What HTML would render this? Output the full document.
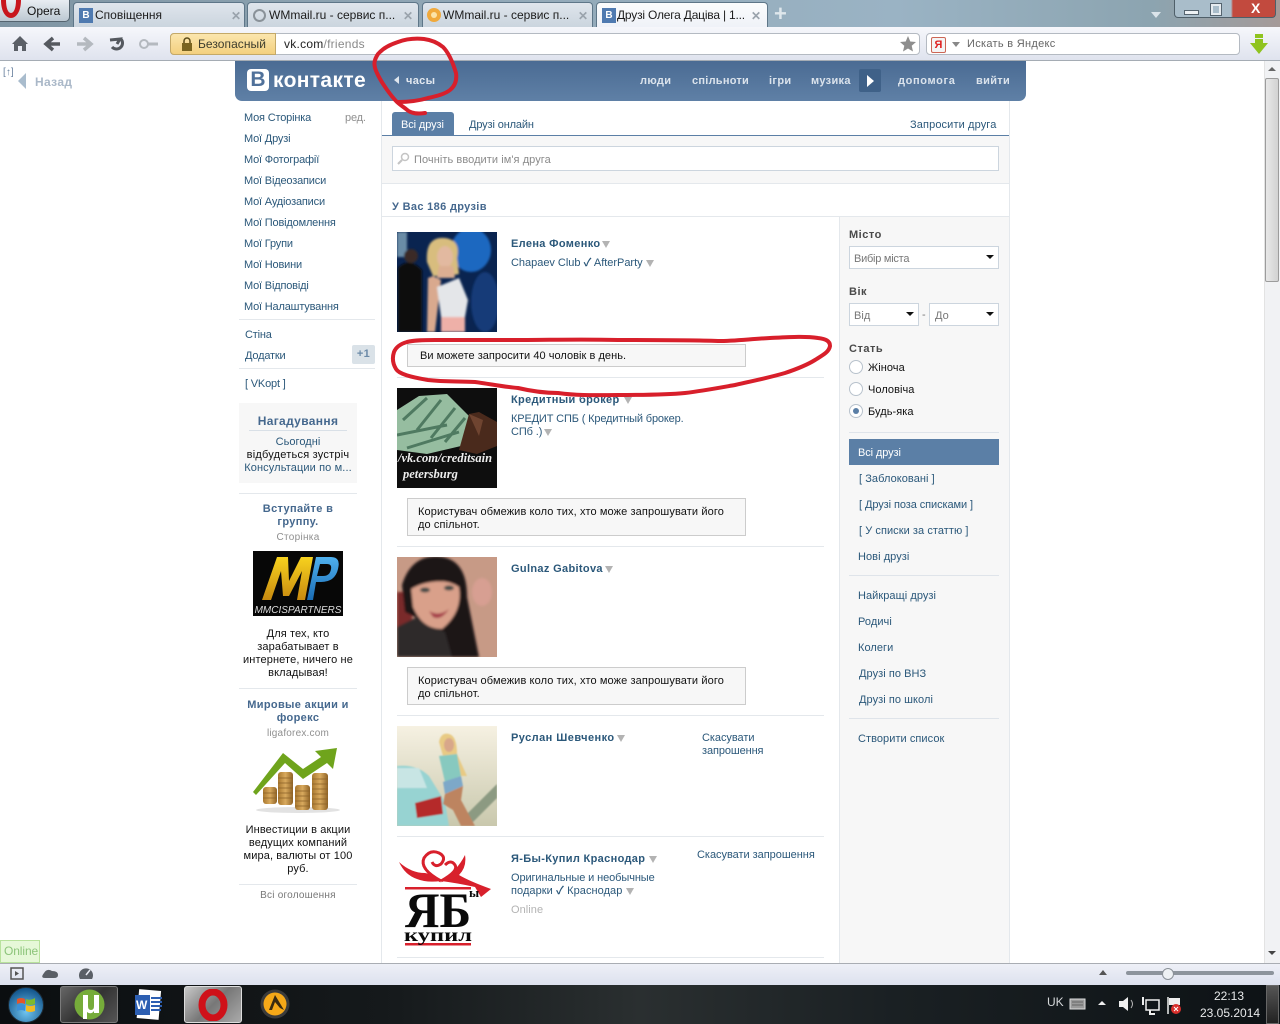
<!DOCTYPE html>
<html lang="uk"><head><meta charset="utf-8"><title>Друзі</title>
<style>
html,body{margin:0;padding:0;width:1280px;height:1024px;overflow:hidden;background:#fff}
body{position:relative;font:11px/14px "Liberation Sans","Noto Sans CJK SC",sans-serif;color:#2b587a}
.t{position:absolute;white-space:nowrap;line-height:14px;letter-spacing:.06px;margin-top:1px}
.n{margin-top:0}
.b{font-weight:bold;letter-spacing:.34px}
.c{text-align:center}
.k{color:#111}
.g{color:#8f8f8f}
.w{color:#777}
.d{color:#4a4a4a;font-weight:bold;letter-spacing:.5px}
.m .t{letter-spacing:-.18px}
.a{letter-spacing:.12px}
.r{position:absolute}
.l{position:absolute;height:1px;background:#e4e8ec}
.ar{position:absolute;width:0;height:0;border-left:4px solid transparent;border-right:4px solid transparent;border-top:7px solid #b3b3b3;margin-top:1px}
.sel{position:absolute;background:#fff;border:1px solid #ccd5de;box-sizing:border-box}
.sel i{position:absolute;right:4px;top:8px;width:0;height:0;border-left:4px solid transparent;border-right:4px solid transparent;border-top:4px solid #111}
.rad{position:absolute;width:12px;height:12px;border:1px solid #b8c2cc;border-radius:50%;background:#fff}
.tab{position:absolute;top:2px;height:25px;background:linear-gradient(#dfe5ec,#cbd5de);border:1px solid #5e7688;border-bottom:0;border-radius:4px 4px 0 0;box-sizing:border-box}
.tab span{position:absolute;left:21px;top:5px;font-size:12px;color:#1c1c1c;white-space:nowrap}
.x{position:absolute;top:6px;color:#9aa3ac;font-size:12px;font-weight:bold}
.vk{position:absolute;left:5px;top:5px;width:14px;height:15px;background:#4f7ab0;color:#fff;font:bold 10px/15px "Liberation Sans",sans-serif;text-align:center}
</style></head><body>

<!-- browser title strip -->
<div class="r" style="left:0;top:0;width:1280px;height:28px;background:linear-gradient(90deg,#7f95a3 0,#93a9b8 40%,#9ab3c4 70%,#8ca4b0 90%,#a59a98 100%)"></div>
<div class="r" style="left:0;top:0;width:70px;height:22px;background:linear-gradient(#e8edf2,#bcc8d2);border:1px solid #55646f;border-top:0;border-left:0;border-radius:0 0 5px 0;box-sizing:border-box"></div>
<svg class="r" style="left:0;top:0" width="24" height="20"><path d="M1 0 C1 12 6 18 11 18 C16 18 21 12 21 0 L16 0 C16 8 14 13 11 13 C8 13 6 8 6 0Z" fill="#c8161d"/></svg>
<div class="t k n" style="left:27px;top:4px;font-size:12px;letter-spacing:0">Opera</div>

<div class="tab" style="left:73px;width:172px"><div class="vk">В</div><span>Сповіщення</span><div class="x" style="left:157px">✕</div></div>
<div class="tab" style="left:247px;width:172px"><svg class="r" style="left:4px;top:5px" width="15" height="15"><circle cx="7.500" cy="7.500" r="5.500" fill="none" stroke="#8a9299" stroke-width="2"/></svg><span>WMmail.ru - сервис п...</span><div class="x" style="left:155px">✕</div></div>
<div class="tab" style="left:422px;width:171px"><svg class="r" style="left:3px;top:4px" width="16" height="16"><circle cx="8" cy="8" r="7" fill="#f0a93c"/><circle cx="8" cy="8" r="3" fill="#fbe3a8"/></svg><span style="left:20px">WMmail.ru - сервис п...</span><div class="x" style="left:155px">✕</div></div>
<div class="tab" style="left:596px;width:172px;height:27px;background:linear-gradient(#fbfcfd,#eef1f7)"><div class="vk">В</div><span style="left:20px;letter-spacing:-.2px">Друзі Олега Дацiва | 1...</span><div class="x" style="left:154px">✕</div></div>
<div class="t n" style="left:774px;top:2px;font-size:22px;line-height:24px;color:#dfe7ec;font-weight:bold">+</div>
<div class="r" style="left:1151px;top:12px;width:0;height:0;border-left:5px solid transparent;border-right:5px solid transparent;border-top:6px solid #dbe4ea"></div>
<div class="r" style="left:1174px;top:0;width:102px;height:18px;border:1px solid #4f5f69;border-top:0;border-radius:0 0 4px 4px;box-sizing:border-box;background:linear-gradient(90deg,#a9bdca 0,#a9bdca 56%,#c24a3e 58%,#c24a3e 100%)"></div>
<div class="r" style="left:1184px;top:10px;width:13px;height:3px;background:#eef2f5;border:1px solid #55646f"></div>
<div class="r" style="left:1211px;top:4px;width:6px;height:7px;border:2px solid #e6ecf0;outline:1px solid #55646f"></div>
<div class="t n" style="left:1251px;top:1px;color:#fff;font-size:14px;font-weight:bold">X</div>

<!-- toolbar -->
<div class="r" style="left:0;top:27px;width:1280px;height:34px;background:linear-gradient(#f6f7fb,#dfe3ee);border-bottom:1px solid #a5acb4;box-sizing:border-box"></div>
<svg class="r" style="left:10px;top:34px" width="150" height="20">
<path d="M2 10 L10 2 L18 10 H16 V17 H12 V12 H8 V17 H4 V10Z" fill="#5a5f66"/>
<path d="M50 10 H37 M43 4 L36 10 L43 16" stroke="#55595f" stroke-width="3.500" fill="none"/>
<path d="M67 10 H80 M74 4 L81 10 L74 16" stroke="#b4b9bf" stroke-width="3.500" fill="none"/>
<path d="M111 5 A6 6 0 1 1 102 13 M100 6 L110 5 L107 10" stroke="#55595f" stroke-width="3" fill="none"/>
<circle cx="134" cy="10" r="4" fill="none" stroke="#b4b9bf" stroke-width="2"/><path d="M138 10H148" stroke="#b4b9bf" stroke-width="3"/>
</svg>
<div class="r" style="left:170px;top:33px;width:750px;height:22px;background:#fff;border:1px solid #b4bac2;border-radius:4px;box-sizing:border-box"></div>
<div class="r" style="left:170px;top:33px;width:106px;height:22px;background:linear-gradient(#fbe6ad,#f3d07f);border:1px solid #c4a968;border-radius:4px 0 0 4px;box-sizing:border-box"></div>
<svg class="r" style="left:181px;top:36px" width="12" height="16"><path d="M3 7V5a3 3 0 0 1 6 0V7" stroke="#5a4a18" stroke-width="1.500" fill="none"/><rect x="1" y="7" width="10" height="8" fill="#7a6420"/></svg>
<div class="t n" style="left:198px;top:37px;color:#3d3d2e;font-size:12px;letter-spacing:.05px">Безопасный</div>
<div class="t n" style="left:284px;top:37px;font-size:12px;color:#222;letter-spacing:.25px">vk.com<span style="color:#8a8a8a">/friends</span></div>
<svg class="r" style="left:899px;top:35px" width="18" height="18"><path d="M9 1 L11.300 6.500 L17 7 L12.700 10.800 L14 16.500 L9 13.500 L4 16.500 L5.300 10.800 L1 7 L6.700 6.500Z" fill="#8e8e8e"/></svg>
<div class="r" style="left:926px;top:33px;width:314px;height:22px;background:#fff;border:1px solid #b4bac2;border-radius:4px;box-sizing:border-box"></div>
<div class="r" style="left:931px;top:37px;width:13px;height:14px;background:#f4f4f4;border:1px solid #c65;border-radius:2px;color:#e02020;font:bold 11px/14px 'Liberation Sans',sans-serif;text-align:center">Я</div>
<div class="r" style="left:952px;top:42px;width:0;height:0;border-left:4px solid transparent;border-right:4px solid transparent;border-top:5px solid #888"></div>
<div class="t" style="left:967px;top:36px;color:#666;letter-spacing:.3px">Искать в Яндекс</div>
<svg class="r" style="left:1249px;top:33px" width="20" height="22"><path d="M6 1H14V5H6ZM6 6H14V10H19L10 21L1 10H6Z" fill="#8fc31f"/></svg>

<!-- vk header -->
<div class="r" style="left:235px;top:61px;width:791px;height:40px;background:linear-gradient(#4a6b93,#5f80a6);border-radius:0 0 7px 7px"></div>
<div class="r" style="left:247px;top:69px;width:22px;height:22px;background:#fff;border-radius:4px;color:#50719a;font:bold 21px/22px 'Liberation Sans',sans-serif;text-align:center">В</div>
<div class="t" style="left:273px;top:69px;font:bold 21px/22px 'Liberation Sans',sans-serif;color:#fff;letter-spacing:.35px">контакте</div>
<div class="r" style="left:394px;top:76px;width:0;height:0;border-top:4px solid transparent;border-bottom:4px solid transparent;border-right:5px solid #dfe6ee"></div>
<div class="t b" style="left:406px;top:73px;color:#e2e8f0">часы</div>
<div class="t b" style="left:640px;top:73px;color:#dbe3ec">люди</div>
<div class="t b" style="left:692px;top:73px;color:#dbe3ec;letter-spacing:.25px">спільноти</div>
<div class="t b" style="left:769px;top:73px;color:#dbe3ec">ігри</div>
<div class="t b" style="left:811px;top:73px;color:#dbe3ec">музика</div>
<div class="r" style="left:859px;top:69px;width:22px;height:23px;background:#3f6188;border-radius:2px"></div>
<div class="r" style="left:867px;top:75px;width:0;height:0;border-top:6px solid transparent;border-bottom:6px solid transparent;border-left:7px solid #fff"></div>
<div class="t b" style="left:898px;top:73px;color:#dbe3ec;letter-spacing:.65px">допомога</div>
<div class="t b" style="left:976px;top:73px;color:#dbe3ec">вийти</div>

<!-- back -->
<div class="t n" style="left:3px;top:66px;color:#6b83a0;font-size:10px">[↑]</div>
<div class="r" style="left:18px;top:73px;width:0;height:0;border-top:8px solid transparent;border-bottom:8px solid transparent;border-right:8px solid #a9bccd"></div>
<div class="t b" style="left:35px;top:74px;color:#aab8c8;font-size:12px">Назад</div>

<!-- left menu -->
<div class="m">
<div class="t" style="left:244px;top:110px">Моя Сторінка</div>
<div class="t g" style="left:345px;top:110px">ред.</div>
<div class="t" style="left:244px;top:131px">Мої Друзі</div>
<div class="t" style="left:244px;top:152px">Мої Фотографії</div>
<div class="t" style="left:244px;top:173px">Мої Відеозаписи</div>
<div class="t" style="left:244px;top:194px">Мої Аудіозаписи</div>
<div class="t" style="left:244px;top:215px">Мої Повідомлення</div>
<div class="t" style="left:244px;top:236px">Мої Групи</div>
<div class="t" style="left:244px;top:257px">Мої Новини</div>
<div class="t" style="left:244px;top:278px">Мої Відповіді</div>
<div class="t" style="left:244px;top:299px">Мої Налаштування</div>
<div class="t" style="left:245px;top:327px">Стіна</div>
<div class="t" style="left:245px;top:348px">Додатки</div>
<div class="t" style="left:245px;top:376px">[ VKopt ]</div>
</div>
<div class="l" style="left:239px;top:319px;width:136px"></div>
<div class="r b" style="left:352px;top:345px;width:23px;height:19px;background:#dae2e8;border-radius:2px;color:#6b8aa8;text-align:center;line-height:19px;font-size:11px">+1</div>
<div class="l" style="left:239px;top:368px;width:136px"></div>

<div class="r" style="left:239px;top:403px;width:118px;height:80px;background:#f7f7f7"></div>
<div class="t b c" style="left:239px;width:118px;top:413px;font-size:12px;color:#45688e">Нагадування</div>
<div class="l" style="left:249px;top:430px;width:98px;background:#d9e0e7"></div>
<div class="t c" style="left:239px;width:118px;top:434px">Сьогодні</div>
<div class="t c k a" style="left:239px;width:118px;top:447px;letter-spacing:.22px">відбудеться зустріч</div>
<div class="t c a" style="left:239px;width:118px;top:460px">Консультации по м...</div>
<div class="l" style="left:239px;top:493px;width:118px"></div>
<div class="t b c" style="left:239px;width:118px;top:501px;color:#45688e">Вступайте в</div>
<div class="t b c" style="left:239px;width:118px;top:514px;color:#45688e">группу.</div>
<div class="t c g" style="left:239px;width:118px;top:530px;font-size:10px;letter-spacing:.3px">Сторінка</div>
<svg class="r" style="left:253px;top:551px" width="90" height="65"><defs><linearGradient id="my" x1="0" y1="0" x2="0" y2="1"><stop offset="0" stop-color="#f7d21e"/><stop offset="1" stop-color="#c88a10"/></linearGradient><linearGradient id="mb" x1="0" y1="0" x2="0" y2="1"><stop offset="0" stop-color="#4fb0ee"/><stop offset="1" stop-color="#1a6cb4"/></linearGradient></defs><rect width="90" height="65" fill="#070707"/>
<path d="M9 49L24 6H35L36 30L48 6H60L52 49H44L49 20L36 45H30L28 20L18 49Z" fill="url(#my)"/>
<path fill-rule="evenodd" d="M54 49L63 6H78Q88 6 85 18Q82 31 68 31H63L60 49ZM67 13L64 25H70Q77 25 78 18Q79 13 74 13Z" fill="url(#mb)"/>
<text x="45" y="62" text-anchor="middle" font-family="Liberation Sans,sans-serif" font-size="10" font-style="italic" fill="#ddd">MMCISPARTNERS</text></svg>
<div class="t c k a" style="left:239px;width:118px;top:626px">Для тех, кто</div>
<div class="t c k a" style="left:239px;width:118px;top:639px">зарабатывает в</div>
<div class="t c k a" style="left:239px;width:118px;top:652px">интернете, ничего не</div>
<div class="t c k a" style="left:239px;width:118px;top:665px">вкладывая!</div>
<div class="l" style="left:239px;top:688px;width:118px"></div>
<div class="t b c" style="left:239px;width:118px;top:697px;color:#45688e">Мировые акции и</div>
<div class="t b c" style="left:239px;width:118px;top:710px;color:#45688e">форекс</div>
<div class="t c g" style="left:239px;width:118px;top:726px;font-size:10px;letter-spacing:.2px">ligaforex.com</div>
<svg class="r" style="left:253px;top:745px" width="90" height="70"><defs><linearGradient id="cn" x1="0" y1="0" x2="1" y2="0"><stop offset="0" stop-color="#a8772f"/><stop offset=".5" stop-color="#d9aa5e"/><stop offset="1" stop-color="#8f6326"/></linearGradient></defs>
<path d="M0 47L30 8L50 24L68 12L62 6L84 3L80 24L74 18L50 34L32 18L3 50Z" fill="#6fa41c"/>
<ellipse cx="45" cy="65" rx="42" ry="3" fill="#e2e2e2"/>
<rect x="10" y="42" width="14" height="17" rx="3" fill="url(#cn)"/><rect x="25" y="27" width="15" height="33" rx="3" fill="url(#cn)"/><rect x="42" y="40" width="15" height="25" rx="3" fill="url(#cn)"/><rect x="59" y="28" width="16" height="37" rx="3" fill="url(#cn)"/>
<path d="M25 33H40M25 38H40M25 43H40M25 48H40M25 53H40M59 34H75M59 39H75M59 44H75M59 49H75M59 54H75M59 59H75M42 46H57M42 51H57M42 56H57M42 61H57M10 48H24M10 53H24" stroke="#8a6228" stroke-width=".8"/></svg>
<div class="t c k a" style="left:239px;width:118px;top:822px">Инвестиции в акции</div>
<div class="t c k a" style="left:239px;width:118px;top:835px">ведущих компаний</div>
<div class="t c k a" style="left:239px;width:118px;top:848px">мира, валюты от 100</div>
<div class="t c k a" style="left:239px;width:118px;top:861px">руб.</div>
<div class="l" style="left:239px;top:884px;width:118px"></div>
<div class="t c w" style="left:239px;width:118px;top:888px;font-size:10px;letter-spacing:.22px">Всі оголошення</div>

<!-- main column -->
<div class="r" style="left:381px;top:101px;width:1px;height:862px;background:#e4e8ec"></div>
<div class="r" style="left:1009px;top:101px;width:1px;height:862px;background:#e4e8ec"></div>
<div class="r" style="left:382px;top:136px;width:627px;height:47px;background:#f7f7f7;border-bottom:1px solid #e4e8ec;box-sizing:content-box"></div>
<div class="r" style="left:382px;top:135px;width:627px;height:1px;background:#5b7fa6"></div>
<div class="r" style="left:392px;top:112px;width:62px;height:23px;background:#5b7fa6;border-radius:3px 3px 0 0"></div>
<div class="t" style="left:401px;top:117px;color:#fff;letter-spacing:-.1px">Всі друзі</div>
<div class="t" style="left:469px;top:117px;letter-spacing:-.13px">Друзі онлайн</div>
<div class="t" style="left:910px;top:117px;letter-spacing:.12px">Запросити друга</div>
<div class="r" style="left:392px;top:146px;width:607px;height:25px;background:#fff;border:1px solid #ccd5de;box-sizing:border-box"></div>
<svg class="r" style="left:397px;top:152px" width="13" height="13"><circle cx="8" cy="5" r="3.500" fill="none" stroke="#c4c4c4" stroke-width="1.500"/><path d="M5 8L1 12" stroke="#c4c4c4" stroke-width="2"/></svg>
<div class="t" style="left:414px;top:152px;color:#8a8a8a;letter-spacing:.07px">Почніть вводити ім'я друга</div>
<div class="t b" style="left:392px;top:199px;color:#45688e">У Вас 186 друзів</div>
<div class="l" style="left:382px;top:216px;width:627px"></div>

<!-- filter column -->
<div class="r" style="left:839px;top:217px;width:170px;height:746px;background:#f7f7f7;border-left:1px solid #e4e8ec;box-sizing:border-box"></div>
<div class="t d" style="left:849px;top:227px">Місто</div>
<div class="sel" style="left:849px;top:246px;width:150px;height:23px"><i></i></div>
<div class="t w" style="left:854px;top:251px;letter-spacing:-.25px">Вибір міста</div>
<div class="t d" style="left:849px;top:284px">Вік</div>
<div class="sel" style="left:849px;top:303px;width:70px;height:23px"><i></i></div>
<div class="t w" style="left:854px;top:308px">Від</div>
<div class="t w" style="left:922px;top:307px">-</div>
<div class="sel" style="left:929px;top:303px;width:70px;height:23px"><i></i></div>
<div class="t w" style="left:935px;top:308px">До</div>
<div class="t d" style="left:849px;top:341px">Стать</div>
<div class="rad" style="left:849px;top:360px"></div><div class="t k" style="left:868px;top:360px">Жіноча</div>
<div class="rad" style="left:849px;top:382px"></div><div class="t k" style="left:868px;top:382px">Чоловіча</div>
<div class="rad" style="left:849px;top:404px"></div><div class="r" style="left:853px;top:408px;width:6px;height:6px;border-radius:50%;background:#5b7fa6"></div><div class="t k" style="left:868px;top:404px">Будь-яка</div>
<div class="l" style="left:849px;top:432px;width:150px;background:#dfe4ea"></div>
<div class="r" style="left:849px;top:439px;width:150px;height:26px;background:#5b7fa6"></div>
<div class="t" style="left:858px;top:445px;color:#fff;letter-spacing:-.1px">Всі друзі</div>
<div class="t" style="left:859px;top:471px">[ Заблоковані ]</div>
<div class="t" style="left:859px;top:497px;letter-spacing:-.08px">[ Друзі поза списками ]</div>
<div class="t" style="left:859px;top:523px">[ У списки за статтю ]</div>
<div class="t" style="left:858px;top:549px">Нові друзі</div>
<div class="l" style="left:849px;top:575px;width:150px;background:#dfe4ea"></div>
<div class="t" style="left:858px;top:588px">Найкращі друзі</div>
<div class="t" style="left:858px;top:614px">Родичі</div>
<div class="t" style="left:858px;top:640px">Колеги</div>
<div class="t" style="left:859px;top:666px">Друзі по ВНЗ</div>
<div class="t" style="left:859px;top:692px">Друзі по школі</div>
<div class="l" style="left:849px;top:718px;width:150px;background:#dfe4ea"></div>
<div class="t" style="left:858px;top:731px">Створити список</div>

<!-- friend 1 -->
<svg class="r" style="left:397px;top:232px" width="100" height="100"><defs><filter id="f1"><feGaussianBlur stdDeviation="1"/></filter></defs><rect width="100" height="100" fill="#0a2450"/><g filter="url(#f1)"><ellipse cx="74" cy="18" rx="20" ry="22" fill="#1a68c0"/><ellipse cx="88" cy="70" rx="14" ry="30" fill="#123a78"/><rect x="0" y="0" width="10" height="25" fill="#6a8ca6"/><path d="M1 100V36Q12 24 25 38V100Z" fill="#08080e"/><circle cx="14" cy="24" r="7" fill="#3a2c28"/><path d="M30 30Q28 4 48 6Q64 8 60 26L62 42L52 44L36 44Z" fill="#d8bd7e"/><ellipse cx="48" cy="25" rx="8" ry="11" fill="#e2b9a0"/><path d="M42 34H56L58 46H40Z" fill="#dcae92"/><path d="M31 46L36 44L44 48L38 100H30Z" fill="#d9a98e"/><path d="M40 55L62 46L71 68L68 85H44Z" fill="#e4e6e9"/><rect x="44" y="85" width="24" height="15" fill="#eeb0a8"/></g></svg>
<div class="t b" style="left:511px;top:236px">Елена Фоменко</div><div class="ar" style="left:602px;top:240px"></div>
<div class="t" style="left:511px;top:255px;letter-spacing:-.02px">Chapaev Club <b>✓</b> AfterParty</div><div class="ar" style="left:646px;top:259px"></div>
<div class="r" style="left:407px;top:344px;width:339px;height:23px;background:#f7f7f7;border:1px solid #ccc;box-sizing:border-box"></div>
<div class="t k" style="left:420px;top:348px;letter-spacing:.04px">Ви можете запросити 40 чоловік в день.</div>
<div class="l" style="left:397px;top:377px;width:427px"></div>

<!-- friend 2 -->
<svg class="r" style="left:397px;top:388px" width="100" height="100"><rect width="100" height="100" fill="#0e0e0e"/><path d="M0 22L22 8L50 6L74 30L64 58L30 66L0 62Z" fill="#96bda0"/><path d="M6 32L30 10M20 42L44 12M34 50L58 20M48 54L68 30M0 47L50 37M10 60L62 44" stroke="#4f7a61" stroke-width="3"/><path d="M62 62L72 26L82 24L100 34V58L80 66Z" fill="#4a2a1c"/><path d="M72 26L86 32L82 48Z" fill="#6f4430"/>
<text x="1" y="74" font-family="Liberation Serif,serif" font-size="12.500" font-weight="bold" font-style="italic" fill="#eee">/vk.com/creditsain</text><text x="6" y="90" font-family="Liberation Serif,serif" font-size="12.500" font-weight="bold" font-style="italic" fill="#eee">petersburg</text></svg>
<div class="t b" style="left:511px;top:392px">Кредитный брокер</div><div class="ar" style="left:624px;top:396px"></div>
<div class="t" style="left:511px;top:411px;letter-spacing:-.15px">КРЕДИТ СПБ ( Кредитный брокер.</div>
<div class="t" style="left:511px;top:424px;letter-spacing:-.1px">СПб .)</div><div class="ar" style="left:544px;top:428px"></div>
<div class="r" style="left:407px;top:498px;width:339px;height:38px;background:#f7f7f7;border:1px solid #ccc;box-sizing:border-box"></div>
<div class="t k" style="left:418px;top:504px;letter-spacing:.11px">Користувач обмежив коло тих, хто може запрошувати його</div>
<div class="t k" style="left:418px;top:517px;letter-spacing:.11px">до спільнот.</div>
<div class="l" style="left:397px;top:546px;width:427px"></div>

<!-- friend 3 -->
<svg class="r" style="left:397px;top:557px" width="100" height="100"><defs><filter id="f3"><feGaussianBlur stdDeviation="1.200"/></filter></defs><rect width="100" height="100" fill="#c79a86"/><g filter="url(#f3)"><rect x="0" y="35" width="15" height="35" fill="#7a2c2a"/><ellipse cx="85" cy="35" rx="10" ry="14" fill="#d79f92"/><path d="M0 100V70L20 60H70L78 100Z" fill="#2f2a2c"/><path d="M5 28Q15 -4 45 0Q70 4 70 40L82 100H55L48 75L18 60L8 55Z" fill="#1b1218"/><path d="M14 30Q45 18 62 30Q66 55 45 72Q25 72 16 50Z" fill="#d9a08a"/><path d="M14 14H60L62 27Q35 20 14 32Z" fill="#1b1218"/><ellipse cx="28" cy="33" rx="5" ry="2.500" fill="#3f4a46"/><ellipse cx="52" cy="31" rx="5" ry="2.500" fill="#3f4a46"/><path d="M32 54Q42 60 52 52Q44 64 36 60Z" fill="#a63e4a"/></g></svg>
<div class="t b" style="left:511px;top:561px">Gulnaz Gabitova</div><div class="ar" style="left:605px;top:565px"></div>
<div class="r" style="left:407px;top:667px;width:339px;height:38px;background:#f7f7f7;border:1px solid #ccc;box-sizing:border-box"></div>
<div class="t k" style="left:418px;top:673px;letter-spacing:.11px">Користувач обмежив коло тих, хто може запрошувати його</div>
<div class="t k" style="left:418px;top:686px;letter-spacing:.11px">до спільнот.</div>
<div class="l" style="left:397px;top:715px;width:427px"></div>

<!-- friend 4 -->
<svg class="r" style="left:397px;top:726px" width="100" height="100"><defs><filter id="f4"><feGaussianBlur stdDeviation=".8"/></filter><linearGradient id="g4" x1="0" y1="0" x2="0" y2="1"><stop offset="0" stop-color="#f6f1e2"/><stop offset="1" stop-color="#c9c8ad"/></linearGradient></defs><rect width="100" height="100" fill="url(#g4)"/><g filter="url(#f4)"><path d="M0 100V40Q20 38 32 50L48 76L52 100Z" fill="#97d3d2"/><path d="M0 42H22L30 62H0Z" fill="#c8e5e4"/><path d="M18 77L44 70L46 88L20 92Z" fill="#b52b2c"/><path d="M62 96L100 58V72L72 100Z" fill="#8c9a82"/><path d="M42 16Q44 6 52 8Q60 10 60 28L70 50L60 50L46 30Z" fill="#e8ca84"/><ellipse cx="52" cy="19" rx="5" ry="7" fill="#d8a78a"/><path d="M42 30L60 28L64 50L48 56Z" fill="#87c9bf"/><path d="M46 56L64 50L66 60L48 68Z" fill="#7da8c8"/><path d="M48 68L66 60L64 74L78 100H64L56 84L46 78Z" fill="#bd8460"/></g></svg>
<div class="t b" style="left:511px;top:730px;letter-spacing:.45px">Руслан Шевченко</div><div class="ar" style="left:617px;top:734px"></div>
<div class="t" style="left:702px;top:730px;letter-spacing:-.05px">Скасувати</div>
<div class="t" style="left:702px;top:743px;letter-spacing:-.1px">запрошення</div>
<div class="l" style="left:397px;top:836px;width:427px"></div>

<!-- friend 5 -->
<svg class="r" style="left:397px;top:847px" width="100" height="100"><rect width="100" height="100" fill="#fff"/>
<path d="M2 15Q14 26 28 26Q40 28 44 34Q30 36 20 32Q8 28 2 15ZM44 34Q60 24 68 8Q70 20 62 28Q72 34 94 42L84 50L78 40Q60 36 44 34Z" fill="#d8202c"/>
<path d="M44 34Q22 22 27 11Q33 2 42 6Q50 10 44 17Q38 21 35 15M44 34Q62 24 58 18Q54 12 48 18" fill="none" stroke="#d8202c" stroke-width="3"/>
<rect x="8" y="40" width="66" height="2.500" fill="#d8202c"/><rect x="8" y="96" width="66" height="2.500" fill="#d8202c"/>
<text x="8" y="80" font-family="Liberation Serif,serif" font-size="50" font-weight="bold" fill="#0a0a0a" textLength="66" lengthAdjust="spacingAndGlyphs">ЯБ</text>
<text x="72" y="50" font-family="Liberation Serif,serif" font-size="13" font-weight="bold" fill="#0a0a0a">ы</text>
<text x="7" y="94" font-family="Liberation Serif,serif" font-size="18" font-weight="bold" fill="#0a0a0a" textLength="68" lengthAdjust="spacingAndGlyphs">купил</text></svg>
<div class="t b" style="left:511px;top:851px">Я-Бы-Купил Краснодар</div><div class="ar" style="left:649px;top:855px"></div>
<div class="t" style="left:511px;top:870px;letter-spacing:-.1px">Оригинальные и необычные</div>
<div class="t" style="left:511px;top:883px">подарки <b>✓</b> Краснодар</div><div class="ar" style="left:626px;top:887px"></div>
<div class="t" style="left:511px;top:902px;color:#b3b3b3">Online</div>
<div class="t" style="left:697px;top:847px;letter-spacing:-.03px">Скасувати запрошення</div>
<div class="l" style="left:397px;top:957px;width:427px"></div>

<!-- scrollbar -->
<div class="r" style="left:1264px;top:61px;width:16px;height:902px;background:#f1f2f4;border-left:1px solid #e3e3e3;box-sizing:border-box"></div>
<div class="r" style="left:1268px;top:67px;width:0;height:0;border-left:4px solid transparent;border-right:4px solid transparent;border-bottom:4px solid #666"></div>
<div class="r" style="left:1265px;top:78px;width:14px;height:204px;background:linear-gradient(90deg,#e8e8e8,#d2d2d2);border:1px solid #9c9c9c;border-radius:2px;box-sizing:border-box"></div>
<div class="r" style="left:1268px;top:951px;width:0;height:0;border-left:4px solid transparent;border-right:4px solid transparent;border-top:4px solid #444"></div>

<!-- online tag -->
<div class="r" style="left:0;top:940px;width:40px;height:23px;background:#e6f8d8;border:1px solid #b8e29c;box-sizing:border-box"></div>
<div class="t n" style="left:4px;top:944px;color:#8cc47a;font-size:12px;letter-spacing:-.1px">Online</div>

<!-- status bar -->
<div class="r" style="left:0;top:963px;width:1280px;height:22px;background:linear-gradient(#eef0f7,#dde1ee);border-top:1px solid #a9adb3;box-sizing:border-box"></div>
<svg class="r" style="left:8px;top:965px" width="90" height="18">
<rect x="3" y="3" width="12" height="11" fill="none" stroke="#555" stroke-width="1.500"/><path d="M7 6L11 8.500L7 11Z" fill="#555"/>
<path d="M37 13Q32 13 36 8Q39 3 44 6Q50 6 50 10Q50 13 46 13Z" fill="#5a5f66"/>
<path d="M72 14A7 7 0 1 1 84 14Z" fill="#5a5f66"/><path d="M78 10L82 5" stroke="#e8eaf2" stroke-width="1.500"/></svg>
<div class="r" style="left:1099px;top:970px;width:0;height:0;border-left:4px solid transparent;border-right:4px solid transparent;border-bottom:5px solid #555"></div>
<div class="r" style="left:1126px;top:971px;width:148px;height:4px;background:#8d949c;border-radius:2px"></div>
<div class="r" style="left:1162px;top:968px;width:10px;height:10px;border-radius:50%;background:#eef1f4;border:1px solid #8a9097"></div>

<!-- taskbar -->
<div class="r" style="left:0;top:985px;width:1280px;height:39px;background:linear-gradient(90deg,#0b0e10 0,#15191b 30%,#2a2f30 50%,#1a2023 70%,#0d1215 100%)"></div>
<svg class="r" style="left:8px;top:986px" width="38" height="38"><defs><radialGradient id="o" cx=".5" cy=".7" r=".7"><stop offset="0" stop-color="#6fc4ef"/><stop offset="1" stop-color="#0e4f86"/></radialGradient></defs><circle cx="18" cy="19" r="17.500" fill="url(#o)" stroke="#1d2a33"/>
<path d="M9 13Q13 11 17 13V18Q13 16 9 18Z" fill="#e4552b"/><path d="M18 13Q22 15 27 12V18Q22 20 18 18Z" fill="#7fba2c"/><path d="M9 19Q13 17 17 19V25Q13 23 9 25Z" fill="#3b8fd8"/><path d="M18 19Q22 21 27 19V25Q22 27 18 25Z" fill="#f2bb22"/></svg>
<div class="r" style="left:60px;top:986px;width:58px;height:37px;background:linear-gradient(135deg,#666 0,#333 50%,#555 100%);border:1px solid #7b7b7b;border-radius:3px;box-sizing:border-box"></div>
<svg class="r" style="left:74px;top:989px" width="32" height="32"><circle cx="15.500" cy="15.500" r="15" fill="#76ac3a"/><path d="M9 6H14V17Q14 21 17 21T20 17V6H25V24H20V22Q17 26 13 23V30H9Z" fill="#fff"/></svg>
<svg class="r" style="left:134px;top:988px" width="32" height="32"><rect x="4" y="2" width="22" height="29" fill="#fff" transform="rotate(5 15 15)"/><rect x="1" y="7" width="15" height="20" fill="#2d5fb2"/><text x="2" y="21" font-family="Liberation Sans,sans-serif" font-size="12" font-weight="bold" fill="#fff">W</text><path d="M17 10H28M17 14H28M17 18H28M17 22H27" stroke="#2d5fb2" stroke-width="2"/></svg>
<div class="r" style="left:184px;top:986px;width:58px;height:37px;background:linear-gradient(135deg,#c8c8c8 0,#777 50%,#aaa 100%);border:1px solid #ddd;border-radius:3px;box-sizing:border-box"></div>
<svg class="r" style="left:198px;top:989px" width="30" height="32"><ellipse cx="15" cy="16" rx="11" ry="13" fill="none" stroke="#cf1119" stroke-width="7"/></svg>
<svg class="r" style="left:260px;top:989px" width="30" height="30"><circle cx="15" cy="15" r="14.500" fill="#3b3b3b"/><circle cx="15" cy="15" r="11.500" fill="#f5a818"/><path d="M15 6L9 21H12L15 13L20 19L24 21Z" fill="#3a2a10"/></svg>
<div class="t n" style="left:1047px;top:995px;color:#d5d8da;font-size:12px;letter-spacing:0">UK</div>
<svg class="r" style="left:1068px;top:994px" width="150" height="24">
<rect x="2" y="5" width="15" height="10" fill="#9a9a9a" stroke="#ddd"/><path d="M4 8H15M4 11H15" stroke="#666"/>
<path d="M30 11L34 7L38 11Z" fill="#eee"/>
<path d="M51 7H55L60 3V17L55 13H51Z" fill="#eee"/><path d="M63 6Q66 10 63 14" stroke="#bbb" fill="none"/>
<rect x="78" y="6" width="13" height="10" fill="none" stroke="#eee" stroke-width="1.500"/><path d="M75 3V11M82 16V20H87" stroke="#eee" stroke-width="2"/>
<path d="M100 3V20" stroke="#eee" stroke-width="1.500"/><path d="M101 4H112V11H101Z" fill="#eee"/><circle cx="108" cy="15" r="5" fill="#d8302c"/><path d="M106 13L110 17M110 13L106 17" stroke="#fff"/></svg>
<div class="t n" style="left:1214px;top:989px;color:#e8eaeb;font-size:12px;letter-spacing:0">22:13</div>
<div class="t n" style="left:1200px;top:1006px;color:#e8eaeb;font-size:12px;letter-spacing:0">23.05.2014</div>
<div class="r" style="left:1266px;top:985px;width:13px;height:39px;background:linear-gradient(#555,#222);border:1px solid #666;box-sizing:border-box"></div>

<!-- red annotations -->
<svg class="r" style="left:0;top:0;pointer-events:none" width="1280" height="1024">
<path d="M425 113 C418 114 411 114 406 109 C402 106 399 104 397 102 C392 97 382 84 377 73 C373 65 374 60 378 54 C384 47 392 44 398 42 C406 39 414 38 424 39 C432 40 438 43 443 47 C449 53 453 63 456 73 C457 80 455 86 450 90 C445 94 437 96 428 98 C418 101 408 102 398 102" fill="none" stroke="#d81f2b" stroke-width="4" stroke-linecap="round"/>
<path d="M407 342 C400 344 396 347 394 352 C392 358 393 364 396 369 C399 374 410 377 428 380 C445 382 460 381 475 382 C490 384 505 387 518 388 C535 392 548 393 558 393 C580 396 600 395 618 395 C640 395 665 395 685 393 C702 391 718 388 735 385 C752 381 768 378 785 373 C797 369 807 365 815 360 C823 355 829 352 830 346 C830 341 826 339 818 338 C805 336 790 337 770 338 C750 339 735 341 718 341 C690 340 650 340 618 340 C580 339 550 340 518 340 C490 340 460 340 435 340 C425 340 415 340 407 342Z" fill="none" stroke="#d81f2b" stroke-width="4" stroke-linejoin="round"/>
</svg>
</body></html>
